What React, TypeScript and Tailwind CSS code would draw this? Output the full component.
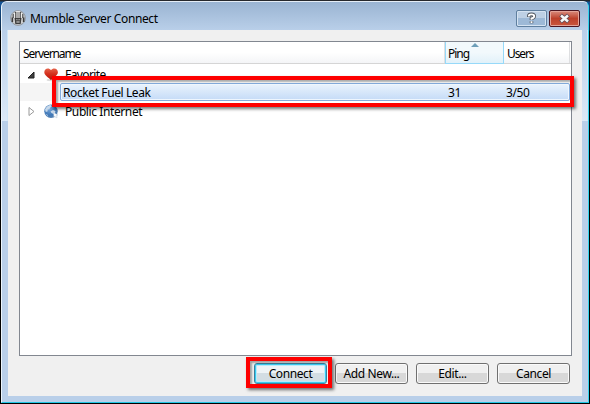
import React from "react";

function Button({ children, primary = false }: { children: React.ReactNode; primary?: boolean }) {
  return (
    <button
      className={`flex h-[21px] w-[73px] items-center justify-center rounded-[3px] border bg-linear-to-b from-50% to-50% pt-px ${
        primary
          ? "border-[#3c7f9c] from-[#eef3f6] to-[#d3dde3] shadow-[inset_0_0_0_1px_#38cbf0,inset_0_0_0_2px_#b9eafa]"
          : "border-[#707070] from-[#f0f0f0] to-[#d8d8d8] shadow-[inset_0_0_0_1px_#fafafa]"
      }`}
    >
      <span className="whitespace-nowrap">{children}</span>
    </button>
  );
}

function MumbleIcon() {
  return (
    <svg width="16" height="16" viewBox="0 0 16 16">
      <circle cx="8" cy="8" r="7.4" fill="#c3c6c9" stroke="#8e959d" strokeWidth=".9" />
      <path d="M4.500 2h7l.5 6-1.500 6h-5L4 8Z" fill="#2b2b2b" />
      <path d="M3.200 4v4M12.800 4v4" stroke="#444" strokeWidth="1" />
      <path d="M4.700 2.500V8M7 1v7M9 1v7M11.300 2.500V8" stroke="#fff" strokeWidth="1.200" />
      <path d="M2.500 7.500v4.500M13.500 7.500v4.500" stroke="#3b3b3b" strokeWidth="1.800" />
      <path d="M4 8v4.500M12 8v4.500" stroke="#eee" strokeWidth="1" />
      <path d="M5.500 8.500h5v5h-5z" fill="#555" />
      <path d="M6.500 9.500h.8M8.700 9.500h.8M6.500 12h3" stroke="#ccc" strokeWidth="1" />
    </svg>
  );
}

function HeartIcon() {
  return (
    <svg width="16" height="16" viewBox="0 0 16 16">
      <defs>
        <linearGradient id="heart" x1="0" y1="0" x2="0" y2="1">
          <stop stopColor="#e5634b" />
          <stop offset=".45" stopColor="#d5321f" />
          <stop offset="1" stopColor="#b51508" />
        </linearGradient>
      </defs>
      <ellipse cx="8" cy="13" rx="5.500" ry="1.200" fill="#ddd" />
      <path d="M7 13.300C5 10.500.3 8.800.3 5.300c0-4.600 5-5 6.700-2C8.700.3 13.900.7 13.900 5.300c0 3.500-4.900 5.200-6.900 8Z" fill="url(#heart)" />
    </svg>
  );
}

function GlobeIcon() {
  return (
    <svg width="16" height="16" viewBox="0 0 16 16">
      <defs>
        <radialGradient id="globe" cx=".4" cy=".35" r=".7">
          <stop stopColor="#78a5d6" />
          <stop offset=".6" stopColor="#3f78b8" />
          <stop offset="1" stopColor="#5681b0" />
        </radialGradient>
      </defs>
      <circle cx="7" cy="7.300" r="6.700" fill="url(#globe)" />
      <path d="M1 5.500C2 2.500 4.500 1 7 .9l.5 1.800-1.500 1-.5 1.500-2 .6.3 1.500-2 .7ZM9 6l2.500 1-.5 2-1.500 1L7.500 9 6.500 7.500ZM1.500 9.500l2 1.200.7 2Z" fill="#c7d8ea" />
      <path d="m9.500 8.500 4.500 2.500-1.700.6.900 1.700-1.200.6-.9-1.600-1.200.9Z" fill="#fff" stroke="#9cb2c9" strokeWidth=".4" />
    </svg>
  );
}

function TitleBar() {
  return (
    <header className="flex h-[28px] shrink-0 items-start bg-linear-to-b from-[#9ab4d2] to-[#b9cfe9] pl-[8px] pr-[8px]">
      <div className="mt-[8px]"><MumbleIcon /></div>
      <h1 className="ml-[4px] mt-[8px] text-[12px] leading-[17px] tracking-[-0.38px] whitespace-nowrap">Mumble Server Connect</h1>
      <div className="ml-auto mt-[8px] flex gap-[2px]">
        <div className="flex h-[17px] w-[31px] items-center justify-center rounded-[2px] border border-[#5f7f9f] bg-linear-to-b from-[#bdd0e5] from-50% to-[#9db9d7] to-50% shadow-[inset_0_0_0_1px_#d5e3f2]">
          <svg width="13" height="13" viewBox="0 0 13 13" fill="none">
            <path d="M3.800 5V4q0-1.600 2.700-1.600T9.200 4.200Q9.200 5.700 6.500 6.500V8M6.500 9.300v1.900" stroke="#50565e" strokeWidth="3.600" />
            <path d="M3.800 4.500V4q0-1.600 2.700-1.600T9.200 4.200Q9.200 5.700 6.500 6.500V7.700M6.500 9.300v1.600" stroke="#fff" strokeWidth="1.900" />
          </svg>
        </div>
        <div className="flex h-[17px] w-[31px] items-center justify-center rounded-[2px] border border-[#4c1420] bg-linear-to-b from-[#d88b7d] via-[#bd402b] via-50% to-[#c9563d] shadow-[inset_0_0_0_1px_#e3a398]">
          <svg width="13" height="13" viewBox="0 0 13 13" fill="none">
            <path d="m2.500 3 8 7m0-7-8 7" stroke="#614c58" strokeWidth="4.200" />
            <path d="m3 3.500 7 6m0-6-7 6" stroke="#f7f7f7" strokeWidth="2.500" />
          </svg>
        </div>
      </div>
    </header>
  );
}

function GlassEdge() {
  return (
    <div className="w-[6px] shrink-0">
      <div className="h-[91px] border-r border-[#cfe6f8] bg-linear-to-b from-[#b9cfe9] to-[#dce9f7]" />
    </div>
  );
}

export default function App() {
  return (
    <div className="relative h-[404px] w-[590px] overflow-hidden bg-[linear-gradient(to_bottom,#26282c_0,#26282c_1px,#155599_2px,#0c2745_30px,#000_31px)] p-px font-['Noto_Sans','Open_Sans',sans-serif] text-[12px] tracking-[-0.4px] text-black">
      <div className="flex h-[402px] w-[588px] flex-col overflow-hidden rounded-t-[6px] border border-t-[#e5edf6] border-r-[#35d4ee] border-b-[#22c6e4] border-l-[#ecf5fc] bg-[#b9cfe9]">
        <TitleBar />
        <div className="flex">
          <GlassEdge />
          <main className="flex h-[366px] w-[574px] flex-col bg-[#f0f0f0] px-[11px] pt-[11px]">
            <section className="h-[315px] w-[553px] shrink-0 border border-[#828790] bg-white">
              <div className="flex h-[22px] border-b border-[#d5d5d5] bg-linear-to-b from-white from-50% to-[#f4f5f7] leading-[24px]">
                <div className="w-[425px] border-r border-[#dedfe1] pl-[3px]"><span className="tracking-[-1.1px]">Servername</span></div>
                <div className="relative -mb-px w-[59px] border-x border-b border-[#96d9f9] bg-linear-to-b from-[#f2f9fc] from-50% to-[#e1f1f9] pl-[2px] tracking-[-1px]">
                  <svg className="absolute left-[25px] top-[1px]" width="8" height="4"><path d="m0 4 4-4 4 4Z" fill="#6e9fb9" /></svg>
                  Ping
                </div>
                <div className="w-[66px] border-r border-[#dedfe1] pl-[3px] tracking-[-1.1px]">Users</div>
              </div>
              <div className="flex h-[19px] items-center pl-[7px] pt-[2px]">
                <svg width="8" height="8"><path d="M7 1v6H1Z" fill="#404040" stroke="#222" /></svg>
                <div className="ml-[9px]"><HeartIcon /></div>
                <span className="ml-[5px] mt-px tracking-[-0.6px]">Favorite</span>
              </div>
              <div className="flex h-[18px] bg-[#f5f5f5] pl-[40px]">
                <div className="flex h-[18px] w-[510px] items-center rounded-[2px] border border-[#84acdd] bg-linear-to-b from-[#eaf3fd] to-[#c5dbf7] pl-[2px] pt-px shadow-[inset_0_0_0_1px_#eff6fe]">
                  <span className="w-[385px]">Rocket Fuel Leak</span>
                  <span className="w-[58px]">31</span>
                  <span>3/50</span>
                </div>
              </div>
              <div className="flex h-[19px] items-center pl-[8px] pt-[2px]">
                <svg width="8" height="9" viewBox="0 0 8 9"><path d="m1 .5 5 4-5 4Z" fill="white" stroke="#999" /></svg>
                <div className="ml-[8px]"><GlobeIcon /></div>
                <span className="ml-[5px] mt-px">Public Internet</span>
              </div>
            </section>
            <div className="mt-[7px] flex justify-end gap-[8px] pr-px">
              <Button primary>Connect</Button>
              <Button>Add New...</Button>
              <Button>Edit...</Button>
              <Button>Cancel</Button>
            </div>
          </main>
          <GlassEdge />
        </div>
      </div>
      <div className="absolute left-[52px] top-[76px] h-[31px] w-[522px] border-4 border-[#fe0000] shadow-[2px_2px_3px_#0008,inset_2px_2px_2px_#0005]" />
      <div className="absolute left-[246px] top-[357px] h-[31px] w-[86px] border-4 border-[#fe0000] shadow-[2px_2px_3px_#0008,inset_2px_2px_2px_#0005]" />
    </div>
  );
}
